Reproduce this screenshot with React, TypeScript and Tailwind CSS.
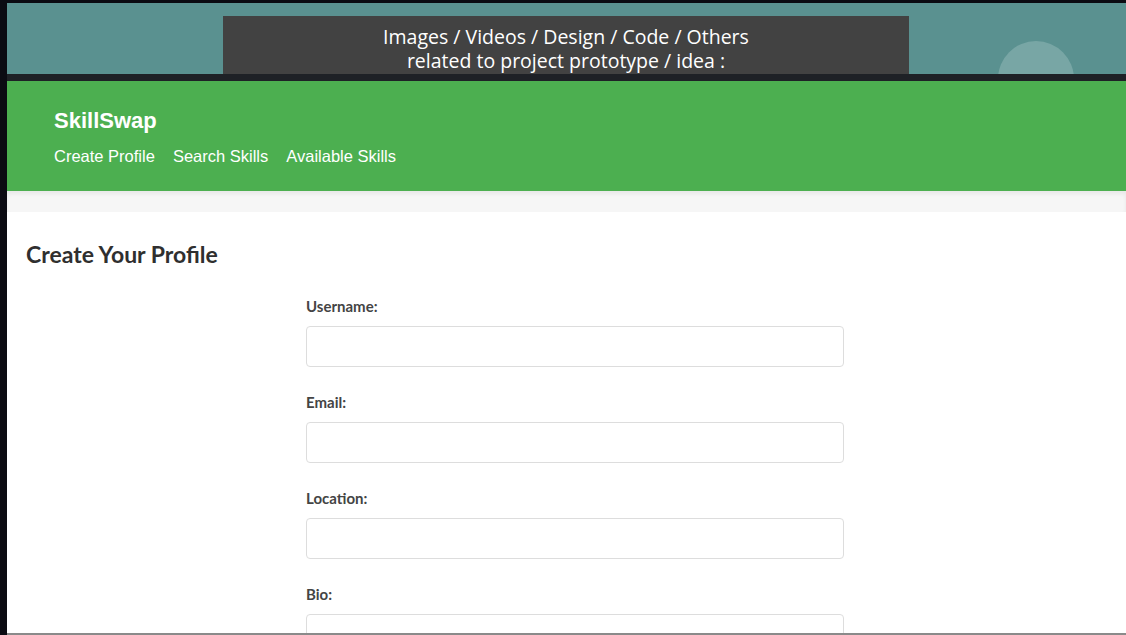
export default function App() {
  const fields = ['Username:', 'Email:', 'Location:', 'Bio:']

  return (
    <div className="flex h-[635px] w-[1126px] overflow-hidden bg-[#0b0b12]">
      {/* LEFT FRAME */}
      <div className="w-[7px] shrink-0 bg-[#0b0b12]" />

      <div className="flex min-w-0 flex-1 flex-col overflow-hidden border-b-2 border-[#8a8a8a]">
        <div className="h-[3px] shrink-0 bg-[#0b0b12]" />

        {/* TOP BAND */}
        <div className="relative flex h-[71px] shrink-0 justify-center overflow-hidden bg-[#5a9190] pt-[13px] pr-[1px]">
          <div className="flex w-[686px] flex-col items-center bg-[#424242] pt-[9px] font-['Open_Sans',sans-serif] text-[19.5px] leading-[24px] text-white">
            <span>Images / Videos / Design / Code / Others</span>
            <span>related to project prototype / idea :</span>
          </div>
          <div className="absolute top-[38px] left-[991px] h-[76px] w-[76px] rounded-full bg-[#78a6a5]" />
        </div>
        <div className="h-[7px] shrink-0 bg-[#1e2126]" />

        {/* HEADER */}
        <header className="h-[110px] shrink-0 bg-[#4caf50] px-[47px] pt-[26px] font-['Liberation_Sans',Arial,sans-serif] text-white">
          <h1 className="text-[22px] leading-[28px] font-bold">SkillSwap</h1>
          <nav className="mt-[10px] flex gap-[18px] text-[16.5px] leading-[22px]">
            <a>Create Profile</a>
            <a>Search Skills</a>
            <a>Available Skills</a>
          </nav>
        </header>
        <div className="h-[21px] shrink-0 bg-[#f6f6f6] shadow-[inset_0_3px_4px_rgba(0,0,0,0.06)]" />

        {/* CONTENT */}
        <main className="flex-1 bg-white px-[19px] pt-[26px] font-['Lato',sans-serif]">
          <h2 className="text-[23px] leading-[32px] font-bold text-[#2f2f2f]">
            Create Your Profile
          </h2>

          <form className="mt-[27px] ml-[280px] flex w-[538px] flex-col gap-[26px]">
            {fields.map((label) => (
              <div key={label} className="flex flex-col gap-[11px]">
                <label className="text-[15px] leading-[18px] font-bold text-[#444]">
                  {label}
                </label>
                <input
                  type="text"
                  className="h-[41px] shrink-0 rounded-[4px] border border-[#ddd] bg-white px-3"
                />
              </div>
            ))}
          </form>
        </main>
      </div>
    </div>
  )
}
